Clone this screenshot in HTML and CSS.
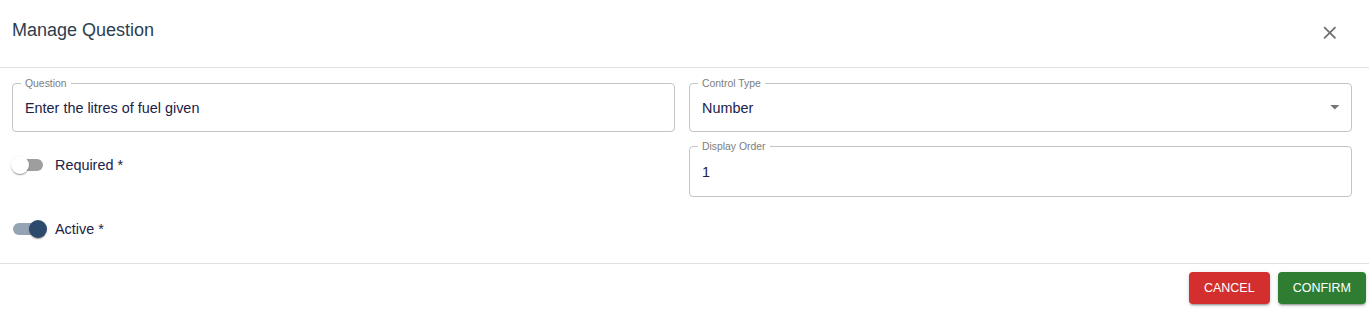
FILE: index.html
```html
<!DOCTYPE html>
<html lang="en">
<head>
<meta charset="utf-8">
<title>Manage Question</title>
<link rel="stylesheet" href="styles.css">
</head>
<body>
<div class="dialog">
  <header class="dialog-header">
    <h2 class="dialog-title">Manage Question</h2>
    <svg class="close-icon" viewBox="0 0 24 24" aria-label="Close"><path d="M19 6.41 17.59 5 12 10.59 6.41 5 5 6.41 10.59 12 5 17.59 6.41 19 12 13.41 17.59 19 19 17.59 13.41 12z"/></svg>
  </header>
  <main class="dialog-content">
    <div class="col">
      <fieldset class="field">
        <legend class="field-label">Question</legend>
        <div class="field-value">Enter the litres of fuel given</div>
      </fieldset>
      <div class="switch-row row-required">
        <span class="switch"><span class="track"></span><span class="thumb"></span></span>
        <span class="switch-label">Required *</span>
      </div>
      <div class="switch-row row-active">
        <span class="switch on"><span class="track"></span><span class="thumb"></span></span>
        <span class="switch-label">Active *</span>
      </div>
    </div>
    <div class="col">
      <fieldset class="field">
        <legend class="field-label">Control Type</legend>
        <div class="field-value select">
          <span>Number</span>
          <svg class="arrow" viewBox="0 0 24 24"><path d="M7 10l5 5 5-5z"/></svg>
        </div>
      </fieldset>
      <fieldset class="field field-second">
        <legend class="field-label">Display Order</legend>
        <div class="field-value tall">1</div>
      </fieldset>
    </div>
  </main>
  <footer class="dialog-footer">
    <button class="btn btn-cancel">CANCEL</button>
    <button class="btn btn-confirm">CONFIRM</button>
  </footer>
</div>
</body>
</html>
```
FILE: styles.css
```css
* { box-sizing: border-box; }
html, body {
  margin: 0;
  padding: 0;
  background: #ffffff;
  font-family: "Liberation Sans", Arial, sans-serif;
}
.dialog {
  width: 1369px;
  height: 311px;
  display: flex;
  flex-direction: column;
}
.dialog-header {
  height: 68px;
  border-bottom: 1px solid #e0e0e0;
  display: flex;
  justify-content: space-between;
  align-items: flex-start;
  padding: 15px 0 0 12px;
}
.dialog-title {
  margin: 0;
  font-size: 18px;
  line-height: 31px;
  font-weight: 400;
  color: #2c3e50;
}
.close-icon {
  width: 21.6px;
  height: 21.6px;
  fill: #707070;
  margin-top: 6.7px;
  margin-right: 28.7px;
}
.dialog-content {
  display: grid;
  grid-template-columns: 1fr 1fr;
  column-gap: 14px;
  align-items: start;
  padding: 10px 17px 17px 12px;
}
.col {
  display: flex;
  flex-direction: column;
}
.field {
  margin: 0;
  min-width: 0;
  padding: 0 12px;
  border: 1px solid #c4c4c4;
  border-radius: 4px;
}
.field-second {
  margin-top: 9px;
}
.field-label {
  font-size: 10.4px;
  line-height: 11px;
  color: #7d7d7d;
  padding: 0 4px;
  margin-left: -4px;
}
.field-value {
  font-size: 14.4px;
  line-height: 36px;
  height: 42px;
  padding: 1px 0 5px;
  color: #212146;
}
.field-value.tall {
  height: 44px;
  padding: 2px 0 6px;
}
.select {
  display: flex;
  justify-content: space-between;
  align-items: center;
}
.arrow {
  width: 21.6px;
  height: 21.6px;
  fill: #757575;
  margin-right: -7px;
  margin-top: -2px;
}
.switch-row {
  height: 34px;
  display: flex;
  align-items: center;
}
.row-required { margin-top: 16px; }
.row-active { margin-top: 30px; }
.switch {
  position: relative;
  width: 36px;
  height: 18px;
  margin-left: -1px;
  flex: none;
}
.track {
  position: absolute;
  left: 1.7px;
  top: 2.7px;
  width: 30.6px;
  height: 12.6px;
  border-radius: 6.3px;
  background: #9e9e9e;
}
.thumb {
  position: absolute;
  left: 0;
  top: 0;
  width: 18px;
  height: 18px;
  border-radius: 50%;
  background: #ffffff;
  box-shadow: 0 2px 1px -1px rgba(0,0,0,.2), 0 1px 1px 0 rgba(0,0,0,.14), 0 1px 3px 0 rgba(0,0,0,.12);
}
.switch.on .track { background: #95a4b5; }
.switch.on .thumb { left: 18px; background: #2c4a6b; }
.switch-label {
  margin-left: 8px;
  font-size: 14.4px;
  color: #212146;
}
.dialog-footer {
  display: flex;
  justify-content: flex-end;
  gap: 8px;
  border-top: 1px solid #e0e0e0;
  padding: 8px 3px 7px 0;
}
.btn {
  height: 32px;
  padding: 0 15px;
  border: none;
  border-radius: 4px;
  color: #ffffff;
  font-family: "Liberation Sans", Arial, sans-serif;
  font-size: 12.5px;
  line-height: 32px;
  box-shadow: 0 3px 1px -2px rgba(0,0,0,.2), 0 2px 2px 0 rgba(0,0,0,.14), 0 1px 5px 0 rgba(0,0,0,.12);
}
.btn-cancel { background: #d32f2f; }
.btn-confirm { background: #2e7d32; }
```
